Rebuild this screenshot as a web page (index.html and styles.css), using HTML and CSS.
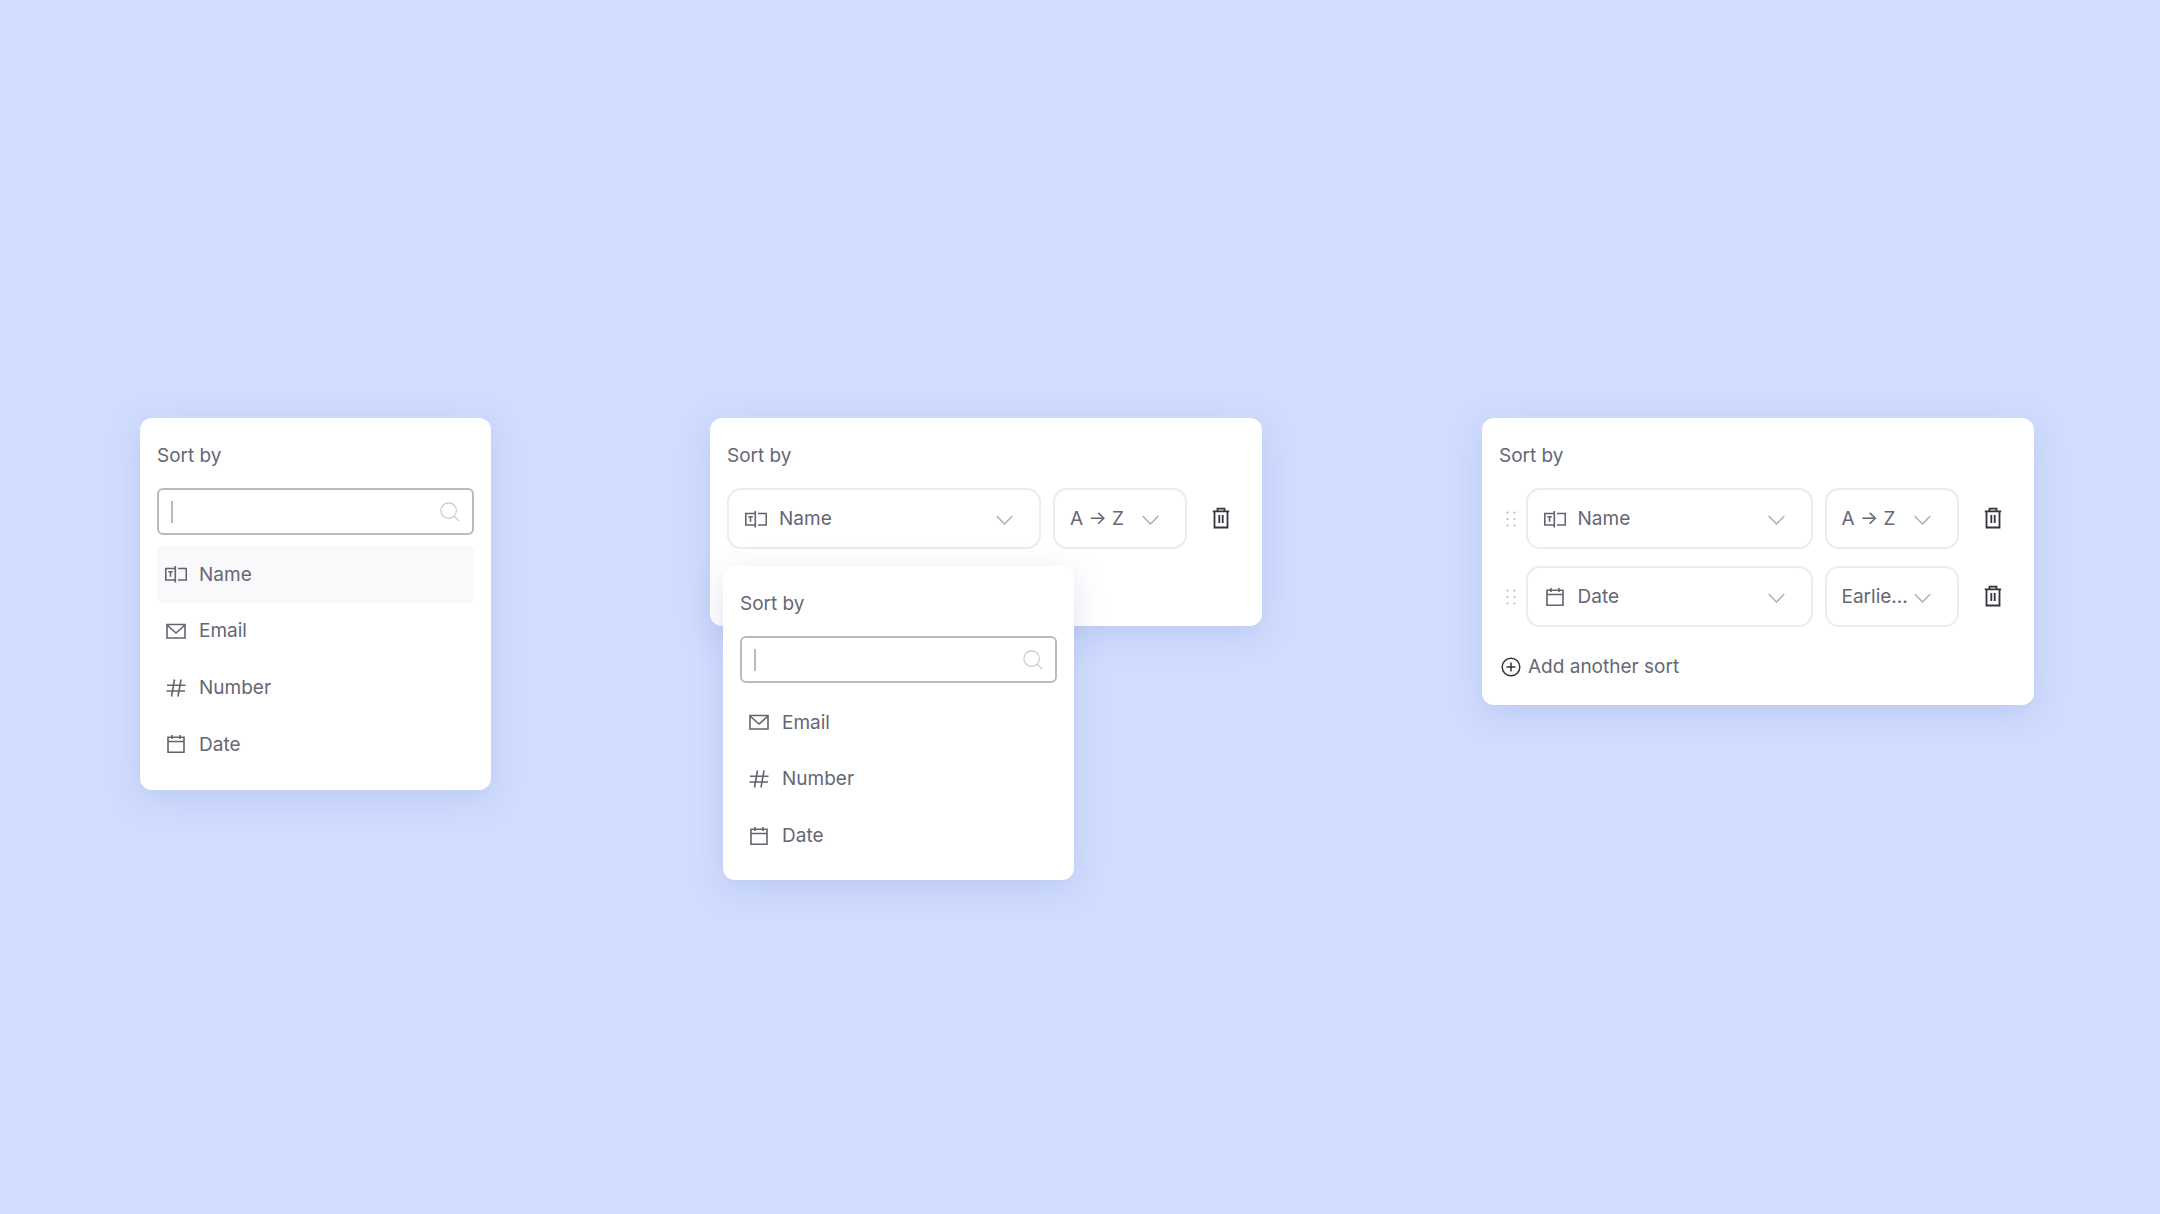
FILE: index.html
```html
<!DOCTYPE html>
<html>
<head>
  <title>Sort by</title>
  <link rel="stylesheet" href="styles.css">
</head>
<body>
  <svg class="sprite" width="0" height="0">
    <symbol id="i-name" viewBox="0 0 22 18">
      <path d="M0.800 3.500h9.500v11.500H0.800zM10.300 1v16.500M13 3.500h8.300v11.500H13M3.300 6.800h4.500M5.500 6.800v5" />
    </symbol>
    <symbol id="i-email" viewBox="0 0 22 18">
      <path d="M2 2.500h18v13.500H2zM2 3l9 8 9-8" />
    </symbol>
    <symbol id="i-number" viewBox="0 0 22 18">
      <path d="M2 6.300h18.500M1.500 12h18.500M9.500 0.500l-3 17M16 0.500l-3 17" />
    </symbol>
    <symbol id="i-date" viewBox="0 0 22 18">
      <path d="M3 2.200h16v15H3zM3 6.500h16M7 0v4M15 0v4" />
    </symbol>
    <symbol id="i-search" viewBox="0 0 22 22">
      <circle cx="9.500" cy="9.500" r="8.500" />
      <path d="M15.500 15.500l5.500 5.500" />
    </symbol>
    <symbol id="i-chevron" viewBox="0 0 17 10">
      <path d="M0.700 1l7.800 8 7.800-8" />
    </symbol>
    <symbol id="i-trash" viewBox="0 0 18 22">
      <path d="M0.800 4.300h16.400M2.500 4.300v16.200h13V4.300M5.500 4.300V1.700h7v2.600M7.300 8v8M10.700 8v8" />
    </symbol>
    <symbol id="i-add" viewBox="0 0 20 20">
      <circle cx="10" cy="10" r="8.800" />
      <path d="M10 5.500v9M5.500 10h9" />
    </symbol>
    <symbol id="i-drag" viewBox="0 0 10 16">
      <circle cx="1.500" cy="1.500" r="1" /><circle cx="8.500" cy="1.500" r="1" />
      <circle cx="1.500" cy="8" r="1" /><circle cx="8.500" cy="8" r="1" />
      <circle cx="1.500" cy="14.500" r="1" /><circle cx="8.500" cy="14.500" r="1" />
    </symbol>
  </svg>

  <div class="stage">
    <div class="card card-picker">
      <div class="card-title">Sort by</div>
      <div class="search">
        <span class="caret"></span>
        <svg class="icon-search"><use href="#i-search"/></svg>
      </div>
      <ul class="field-list">
        <li class="field-item active"><svg class="icon"><use href="#i-name"/></svg>Name</li>
        <li class="field-item"><svg class="icon"><use href="#i-email"/></svg>Email</li>
        <li class="field-item"><svg class="icon"><use href="#i-number"/></svg>Number</li>
        <li class="field-item"><svg class="icon"><use href="#i-date"/></svg>Date</li>
      </ul>
    </div>

    <div class="card card-single">
      <div class="card-title">Sort by</div>
      <div class="sort-row">
        <div class="select select-field">
          <svg class="icon"><use href="#i-name"/></svg>
          <span class="select-text">Name</span>
          <svg class="icon-chevron"><use href="#i-chevron"/></svg>
        </div>
        <div class="select select-order">
          <span class="select-text">A → Z</span>
          <svg class="icon-chevron"><use href="#i-chevron"/></svg>
        </div>
        <svg class="icon-trash"><use href="#i-trash"/></svg>
      </div>

      <div class="card card-picker card-popup">
        <div class="card-title">Sort by</div>
        <div class="search">
          <span class="caret"></span>
          <svg class="icon-search"><use href="#i-search"/></svg>
        </div>
        <ul class="field-list">
          <li class="field-item"><svg class="icon"><use href="#i-email"/></svg>Email</li>
          <li class="field-item"><svg class="icon"><use href="#i-number"/></svg>Number</li>
          <li class="field-item"><svg class="icon"><use href="#i-date"/></svg>Date</li>
        </ul>
      </div>
    </div>

    <div class="card card-multi">
      <div class="card-title">Sort by</div>
      <div class="sort-row">
        <svg class="icon-drag"><use href="#i-drag"/></svg>
        <div class="select select-field">
          <svg class="icon"><use href="#i-name"/></svg>
          <span class="select-text">Name</span>
          <svg class="icon-chevron"><use href="#i-chevron"/></svg>
        </div>
        <div class="select select-order">
          <span class="select-text">A → Z</span>
          <svg class="icon-chevron"><use href="#i-chevron"/></svg>
        </div>
        <svg class="icon-trash"><use href="#i-trash"/></svg>
      </div>
      <div class="sort-row">
        <svg class="icon-drag"><use href="#i-drag"/></svg>
        <div class="select select-field">
          <svg class="icon"><use href="#i-date"/></svg>
          <span class="select-text">Date</span>
          <svg class="icon-chevron"><use href="#i-chevron"/></svg>
        </div>
        <div class="select select-order">
          <span class="select-text">Earlie...</span>
          <svg class="icon-chevron"><use href="#i-chevron"/></svg>
        </div>
        <svg class="icon-trash"><use href="#i-trash"/></svg>
      </div>
      <div class="add-sort"><svg class="icon-add"><use href="#i-add"/></svg>Add another sort</div>
    </div>
  </div>
</body>
</html>
```

FILE: styles.css
```css
* {
  box-sizing: border-box;
}
html,
body {
  margin: 0;
  padding: 0;
  height: 100%;
}
body {
  font-family: Inter, "Noto Sans", sans-serif;
  font-size: 19px;
  color: #656773;
  background-color: #d1ddfe;
  overflow: hidden;
}
.sprite {
  position: absolute;
}
.stage {
  display: flex;
  align-items: flex-start;
  padding: 418px 0 0 140px;
}
.card {
  background-color: #ffffff;
  border-radius: 12px;
  padding: 17px;
  box-shadow: 0 8px 32px rgba(90, 110, 190, 0.18);
}
.card-title {
  height: 24px;
  line-height: 24px;
  margin-top: 9px;
  margin-bottom: 20px;
}
.card-picker {
  width: 351px;
  height: 372px;
}
.card-single {
  position: relative;
  width: 552px;
  height: 208px;
  margin-left: 219px;
}
.card-multi {
  width: 552px;
  height: 287px;
  margin-left: 220px;
}
.card-popup {
  position: absolute;
  left: 13px;
  top: 148px;
  height: 314px;
  z-index: 2;
}
.search {
  display: flex;
  align-items: center;
  justify-content: space-between;
  height: 47px;
  padding: 0 12px;
  border: 2px solid #b9b9c2;
  border-radius: 6px;
}
.caret {
  width: 2px;
  height: 22px;
  background-color: #b9b9c2;
}
.icon-search {
  width: 20px;
  height: 20px;
  fill: none;
  stroke: #c4c5cc;
  stroke-width: 1.2;
}
.field-list {
  list-style: none;
  margin: 11px 0 0;
  padding: 0;
}
.field-item {
  display: flex;
  align-items: center;
  height: 56.67px;
  padding-left: 8px;
  border-radius: 6px;
}
.field-item .icon {
  margin-right: 12px;
}
.field-item.active {
  background-color: #f9f9fb;
}
.icon {
  flex: none;
  width: 22px;
  height: 18px;
  fill: none;
  stroke: #62646f;
  stroke-width: 1.6;
}
.sort-row {
  display: flex;
  align-items: center;
  gap: 12px;
  margin-bottom: 17px;
}
.select {
  display: flex;
  align-items: center;
  height: 61px;
  border: 2px solid #ebebf0;
  border-radius: 14px;
}
.select-field {
  width: 314px;
  padding: 0 26px 0 16px;
}
.select-field .select-text {
  margin-left: 12px;
}
.select-order {
  width: 134px;
  padding: 0 26px 0 15px;
}
.card-multi .select-field {
  width: 287px;
}
.select-text {
  flex: 1;
  white-space: nowrap;
}
.icon-chevron {
  flex: none;
  width: 17px;
  height: 10px;
  margin-top: 2px;
  fill: none;
  stroke: #aeb0b9;
  stroke-width: 1.5;
}
.icon-trash {
  flex: none;
  width: 18px;
  height: 22px;
  margin-left: 13px;
  margin-bottom: 2px;
  fill: none;
  stroke: #33353d;
  stroke-width: 1.8;
}
.icon-drag {
  flex: none;
  width: 10px;
  height: 16px;
  margin-left: 7px;
  margin-right: -2.500px;
  fill: #b4b5bd;
}
.add-sort {
  display: flex;
  align-items: center;
  gap: 7px;
  margin-top: 28px;
  margin-left: 2px;
}
.icon-add {
  width: 20px;
  height: 20px;
  fill: none;
  stroke: #33353d;
  stroke-width: 1.5;
}
```
